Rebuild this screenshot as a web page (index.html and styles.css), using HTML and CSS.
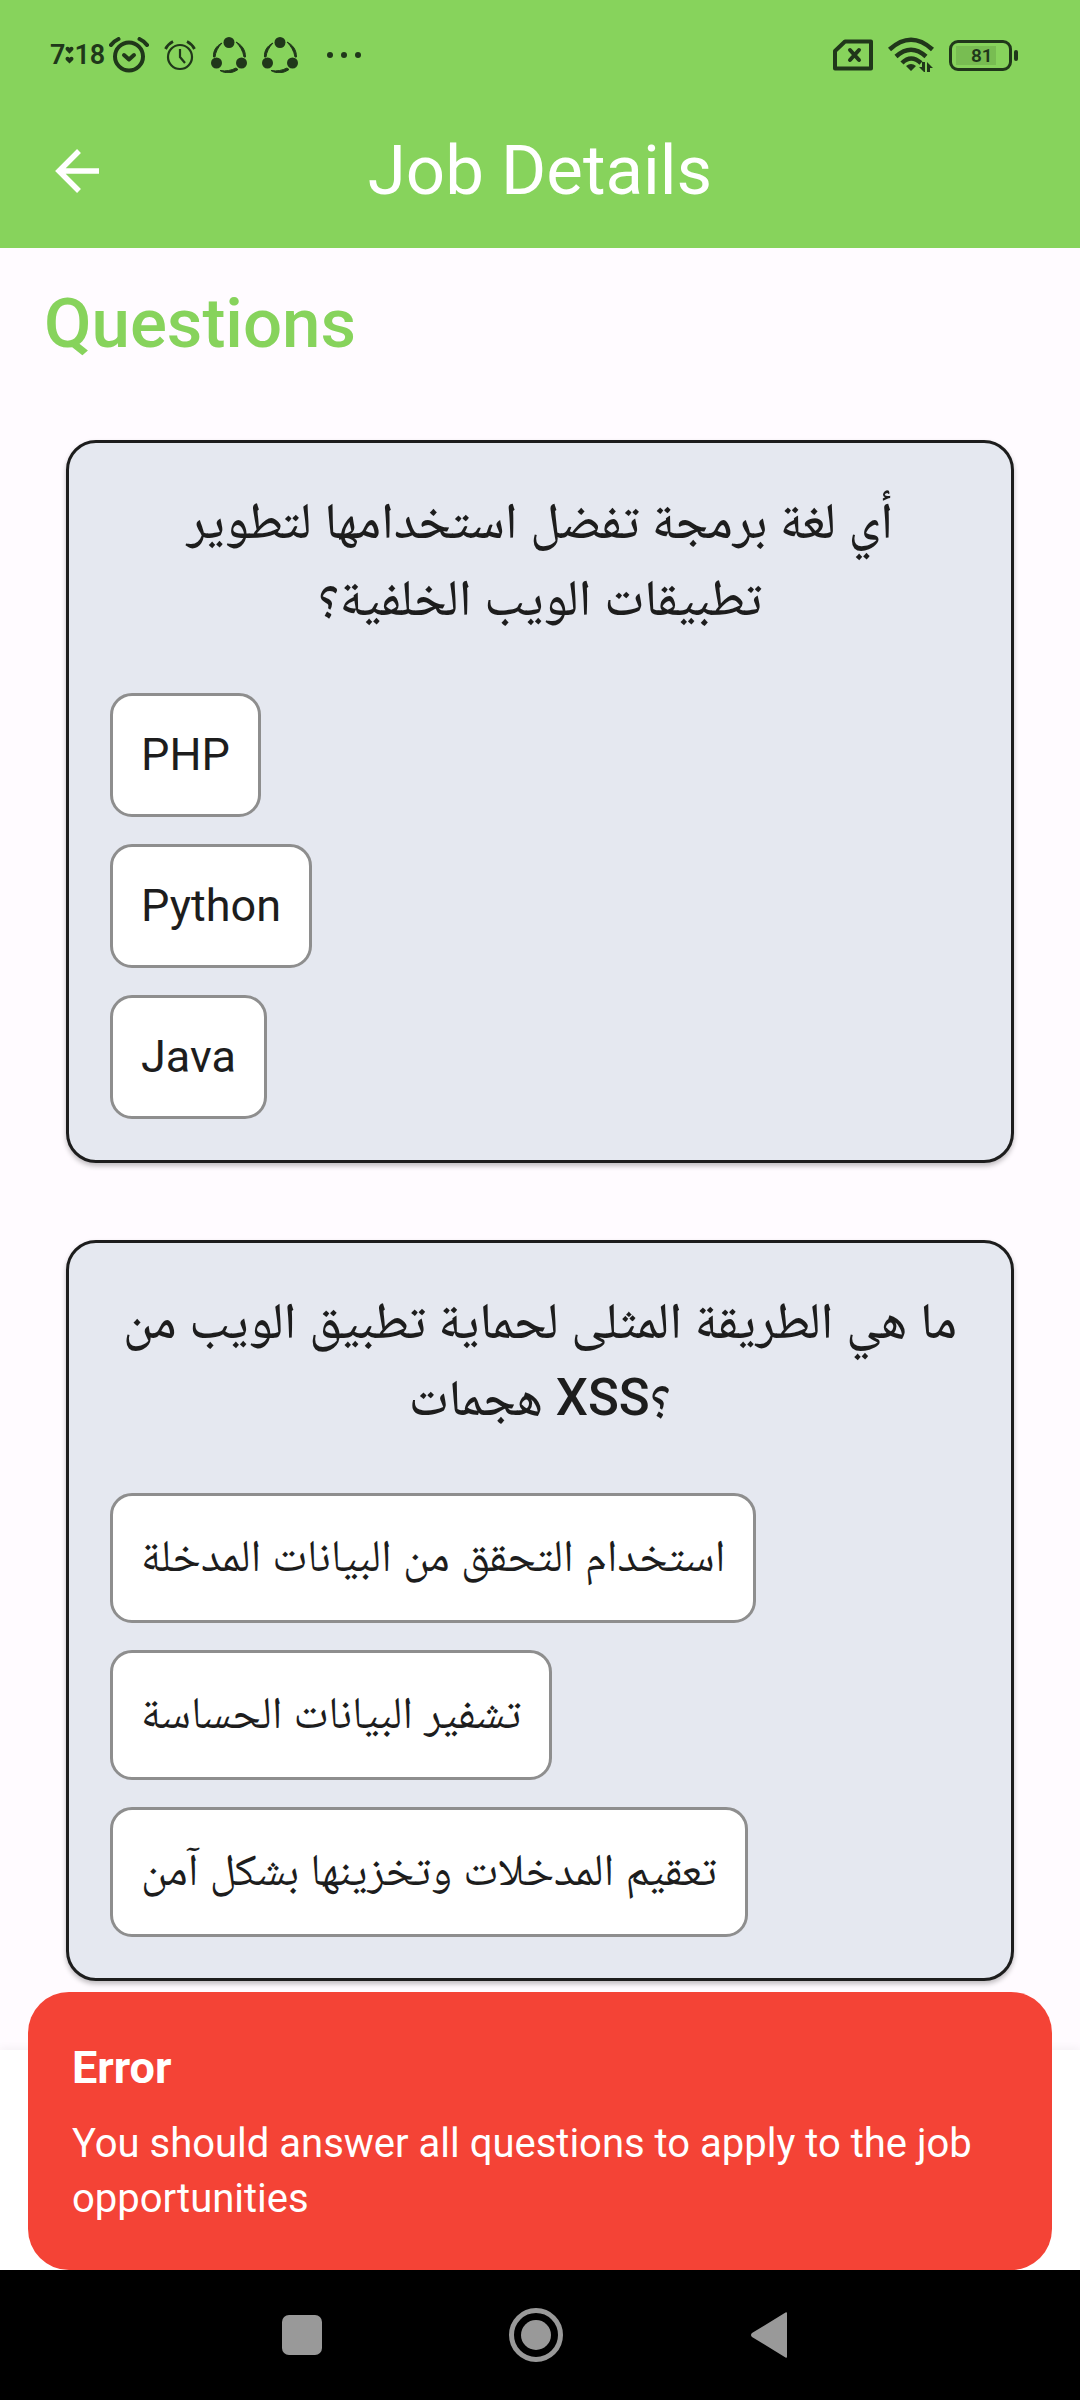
FILE: index.html
```html
<!DOCTYPE html>
<html lang="en">
<head>
<meta charset="utf-8">
<meta name="viewport" content="width=device-width, initial-scale=1">
<title>Job Details</title>
<link rel="stylesheet" href="styles.css">
</head>
<body>
<header class="header">
  <div class="status">
    <div class="clock"><span>7</span><svg width="9" height="20" viewBox="0 0 10 20"><path d="M5 8.500L1 4.500C-.5 2 2.500-.5 5 2 7.500-.5 10.500 2 9 4.500zM5 19.500L1 15.500C-.5 13 2.500 10.500 5 13 7.500 10.500 10.500 13 9 15.500z"/></svg><span>18</span></div>
    <svg class="alarm" width="40" height="36" viewBox="0 0 40 36"><g fill="none" stroke="currentColor" stroke-width="4" stroke-linecap="round"><circle cx="20" cy="19.500" r="14"/><path d="M2 8Q5 4 9.500 2M38 8Q35 4 30.500 2"/><path d="M15 18l5 4.500 5-4.500" stroke-linejoin="round"/></g></svg>
    <svg class="alarm-small" width="32" height="32" viewBox="0 0 32 32"><g fill="none" stroke="currentColor" stroke-width="2.200"><circle cx="16" cy="18" r="12"/><path d="M1.500 10Q4 5 9 2.500M30.500 10Q28 5 23 2.500" stroke-width="2.800"/><path d="M16 10v8l5 6"/></g></svg>
    <svg class="share" width="36" height="36" viewBox="0 0 36 36"><circle cx="18" cy="5.500" r="5.500"/><circle cx="5.500" cy="26" r="5.500"/><circle cx="30.500" cy="26" r="5.500"/><path d="M11 6C5 9 2 14 2.500 20h1.500C4.500 15 7 10 11 6zM25 5c6 3 9.500 8 9.500 15H33C32 14 29 9 25 5zM9 33.500c6 3.500 12 3 18-1l-2-1.500c-5 2.500-10 3.500-16 2.500z" stroke="currentColor"/></svg>
    <svg class="share" width="36" height="36" viewBox="0 0 36 36"><circle cx="18" cy="5.500" r="5.500"/><circle cx="5.500" cy="26" r="5.500"/><circle cx="30.500" cy="26" r="5.500"/><path d="M11 6C5 9 2 14 2.500 20h1.500C4.500 15 7 10 11 6zM25 5c6 3 9.500 8 9.500 15H33C32 14 29 9 25 5zM9 33.500c6 3.500 12 3 18-1l-2-1.500c-5 2.500-10 3.500-16 2.500z" stroke="currentColor"/></svg>
    <svg class="more" width="36" height="8" viewBox="0 0 36 8"><circle cx="4" cy="4" r="3"/><circle cx="18" cy="4" r="3"/><circle cx="32" cy="4" r="3"/></svg>
    <svg class="sim" width="40" height="32" viewBox="0 0 40 32"><g fill="none" stroke="currentColor" stroke-width="4" stroke-linejoin="round"><path d="M12 2.500H38V29.500H2V12z"/><path d="M17 11l9 10M26 11l-9 10" stroke-linecap="round"/></g></svg>
    <svg class="wifi" width="46" height="36" viewBox="0 0 46 36"><g fill="none" stroke="currentColor" stroke-width="4.500"><path d="M1.500 12.500Q23-7 44.500 12.500M8 19.500Q23 6 38 19.500M14 26Q23 17 33 26"/></g><path d="M18 29Q23 25 28 29L23 34zM31 30h3v-5h3v10h-1zM39 35v-10l6 6h-3v4z"/></svg>
    <div class="battery"><span class="battery-level">81</span></div>
  </div>
  <div class="toolbar">
    <button class="back" type="button" aria-label="Back"><svg width="44" height="44" viewBox="0 0 44 44"><path d="M44 22H4M24 2L4 22l20 20" fill="none" stroke="currentColor" stroke-width="5.500"/></svg></button>
    <h1 class="title">Job Details</h1>
  </div>
</header>
<main class="content">
  <h2 class="heading">Questions</h2>
  <section class="card">
    <h3 class="question">أي لغة برمجة تفضل استخدامها لتطوير تطبيقات الويب الخلفية؟</h3>
    <div class="options">
      <button class="option" type="button">PHP</button>
      <button class="option" type="button">Python</button>
      <button class="option" type="button">Java</button>
    </div>
  </section>
  <section class="card">
    <h3 class="question">ما هي الطريقة المثلى لحماية تطبيق الويب من هجمات XSS؟</h3>
    <div class="options">
      <button class="option option-ar" type="button" lang="ar">استخدام التحقق من البيانات المدخلة</button>
      <button class="option option-ar" type="button" lang="ar">تشفير البيانات الحساسة</button>
      <button class="option option-ar" type="button" lang="ar">تعقيم المدخلات وتخزينها بشكل آمن</button>
    </div>
  </section>
</main>
<footer class="bottom-bar">
  <div class="toast" role="alert">
    <strong class="toast-title">Error</strong>
    <p class="toast-text">You should answer all questions to apply to the job opportunities</p>
  </div>
</footer>
<nav class="system-nav" aria-label="System">
  <button type="button" aria-label="Recents"><svg width="56" height="56" viewBox="0 0 56 56"><rect x="8" y="8" width="40" height="40" rx="7"/></svg></button>
  <button type="button" aria-label="Home"><svg width="56" height="56" viewBox="0 0 56 56"><circle cx="28" cy="28" r="24.500" fill="none" stroke="currentColor" stroke-width="5"/><circle cx="28" cy="28" r="15"/></svg></button>
  <button type="button" aria-label="Back"><svg width="56" height="56" viewBox="0 0 56 56"><path d="M45 6.500v43q0 2-1.500 1L10 30q-2-2 0-4L43.500 5.500q1.500-1 1.500 1z"/></svg></button>
</nav>
</body>
</html>
```
FILE: styles.css
```css
* {
  box-sizing: border-box;
}

body {
  display: flex;
  flex-direction: column;
  min-height: 100vh;
  margin: 0;
  background: #fffbff;
  color: #1d1d1d;
  font-family: Roboto, "Noto Naskh Arabic", "Noto Sans Arabic", sans-serif;
}

h1, h2, h3, p {
  margin: 0;
}

button {
  border: 0;
  background: none;
  color: inherit;
  font: inherit;
}

svg {
  display: block;
  flex: none;
  fill: currentColor;
}

.header {
  background: #87d35c;
}

.status {
  display: flex;
  align-items: center;
  height: 94px;
  padding: 16px 68px 0 50px;
  color: #20371a;
}

.clock {
  display: flex;
  align-items: center;
  width: 59px;
  font: 600 27px/32px Roboto, sans-serif;
}

.alarm-small,
.share {
  margin-left: 15px;
}

.more {
  margin-left: 28px;
}

.sim {
  margin-left: auto;
}

.wifi,
.battery {
  margin-left: 15px;
}

.battery {
  position: relative;
  width: 63px;
  height: 31px;
  padding: 3px 4px;
  border: 3px solid;
  border-radius: 9px;
}

.battery::after {
  content: "";
  position: absolute;
  top: 7px;
  right: -9px;
  width: 4px;
  height: 11px;
  border-radius: 2px;
  background: currentColor;
}

.battery-level {
  display: block;
  width: 40px;
  padding-left: 15px;
  background: #78bd52;
  font: 600 19px/19px Roboto, sans-serif;
}

.toolbar {
  display: grid;
  grid-template-columns: 154px 1fr 154px;
  align-items: center;
  height: 154px;
  color: #fff;
}

.back {
  display: grid;
  place-items: center;
  height: 100%;
}

.title {
  font-size: 69px;
  font-weight: 400;
  line-height: 80px;
  text-align: center;
}

.content {
  flex: 1;
  padding: 36px 66px 69px;
}

.heading {
  margin: 0 -22px 76px;
  color: #87d35c;
  font-size: 69px;
  font-weight: 500;
  line-height: 80px;
}

.card {
  padding: 39px 41px 41px;
  border: 3px solid #1d1d1d;
  border-radius: 30px;
  background: #e5e8f0;
  box-shadow: 0 3px 5px rgb(0 0 0 / 25%);
}

.card + .card {
  margin-top: 77px;
}

.question {
  margin-bottom: 57px;
  font-size: 51px;
  font-weight: 500;
  line-height: 77px;
  text-align: center;
}

.options {
  display: flex;
  flex-direction: column;
  align-items: flex-start;
  gap: 27px;
}

.option {
  padding: 33px 28px;
  border: 3px solid #8e8e8e;
  border-radius: 22px;
  background: #fff;
  font-size: 45px;
  line-height: 52px;
}

.option-ar {
  padding: 31px 28px 35px;
  line-height: 58px;
}

.bottom-bar {
  position: relative;
  height: 220px;
  background: #fff;
  box-shadow: 0 -3px 8px rgb(0 0 0 / 4%);
}

.toast {
  position: absolute;
  right: 28px;
  bottom: 0;
  left: 28px;
  padding: 50px 44px 44px;
  border-radius: 41px;
  background: #f44336;
  color: #fff;
}

.toast-title {
  display: block;
  margin-bottom: 22px;
  font-size: 45px;
  font-weight: 700;
  line-height: 52px;
}

.toast-text {
  font-size: 40px;
  line-height: 55px;
}

.system-nav {
  display: flex;
  justify-content: center;
  gap: 178px;
  height: 130px;
  padding-right: 8px;
  background: #000;
  color: #999;
}

.system-nav button {
  padding: 0;
}
```
